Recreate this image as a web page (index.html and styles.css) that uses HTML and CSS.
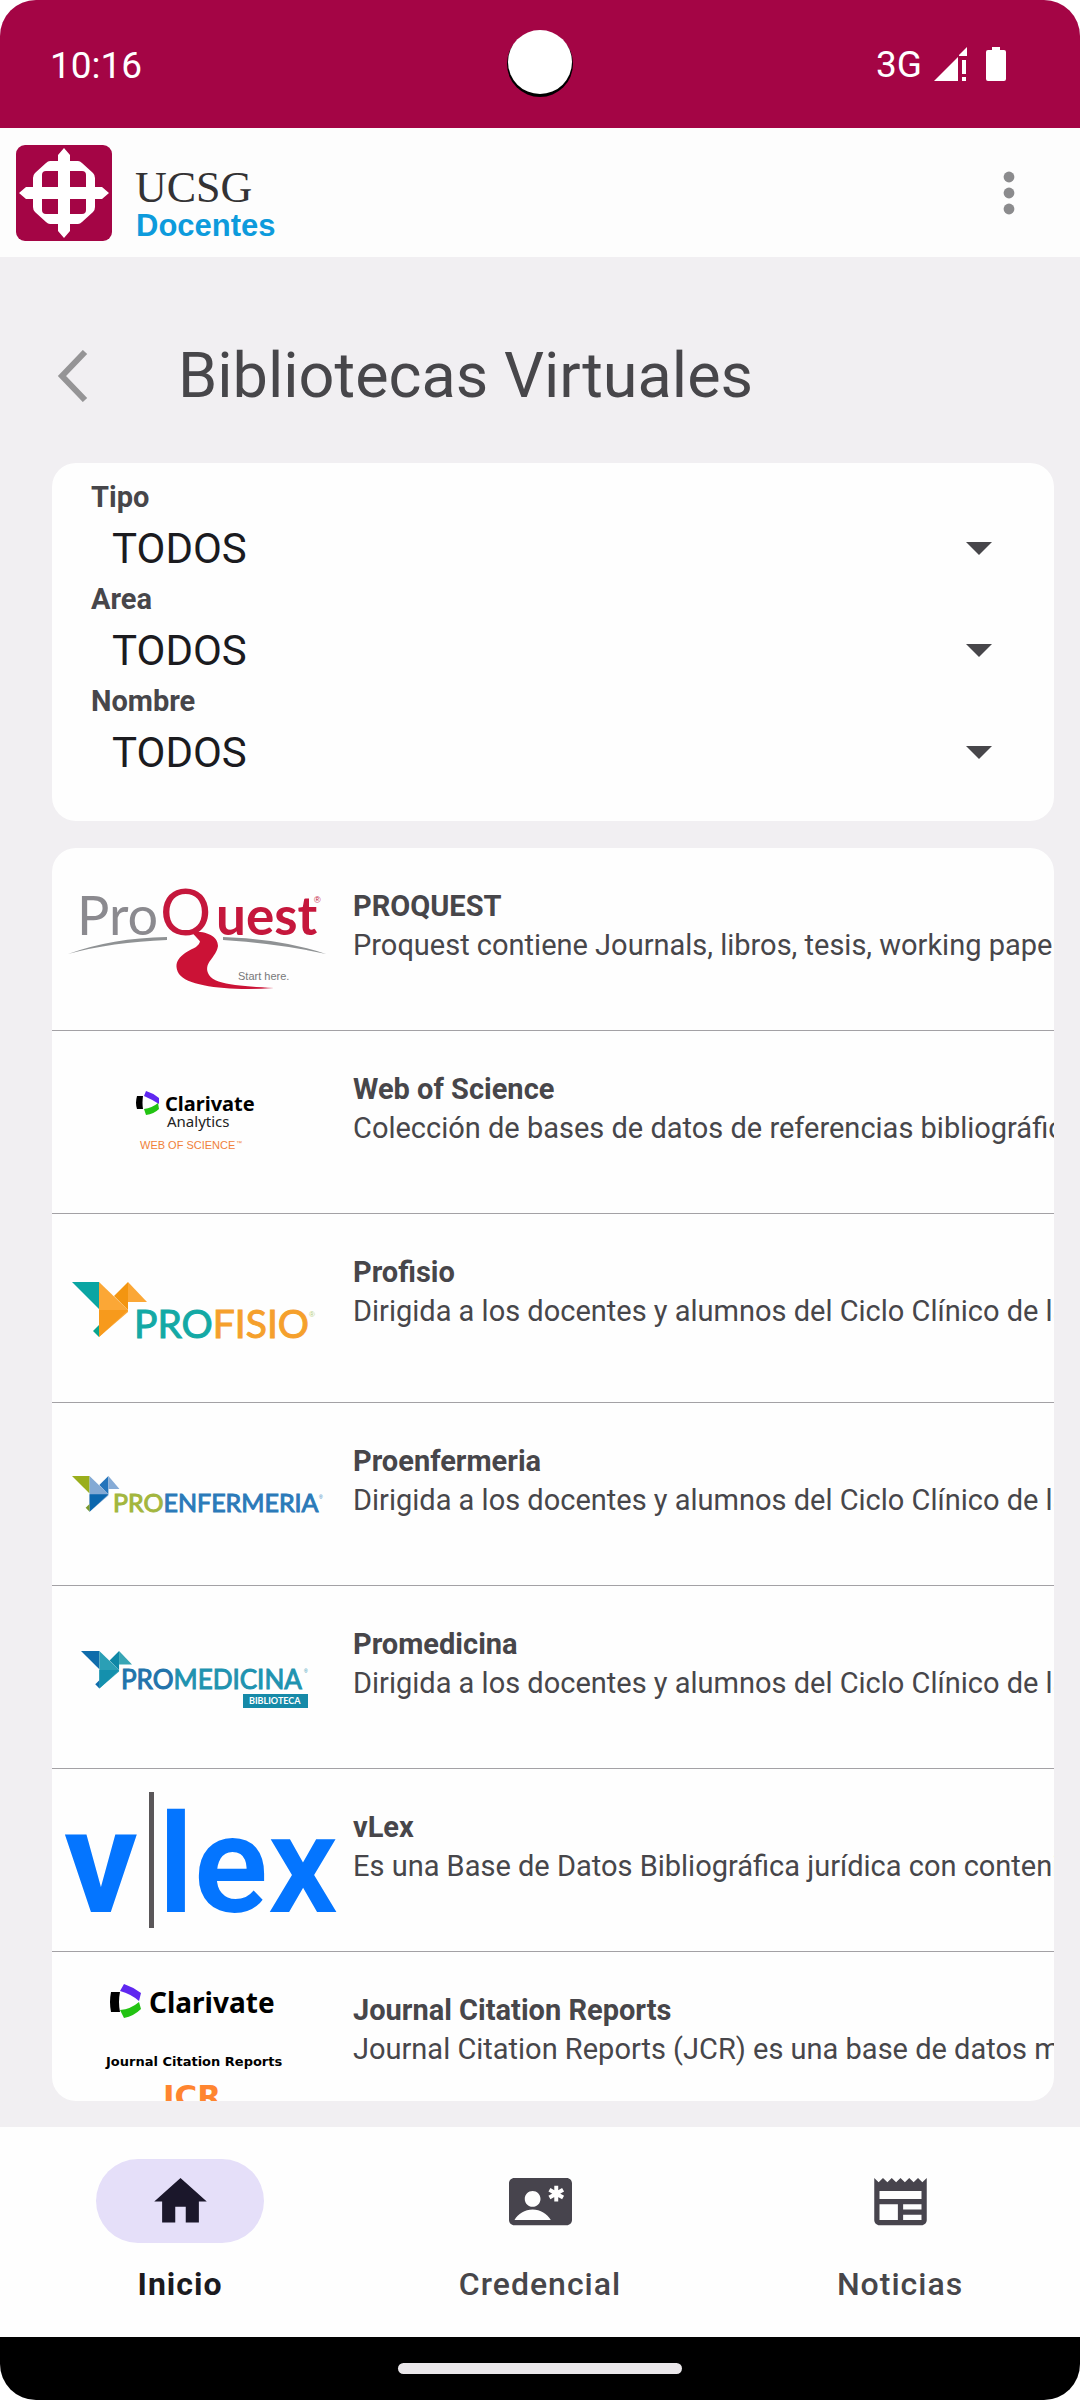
FILE: index.html
```html
<!DOCTYPE html>
<html lang="es">
<head>
<meta charset="utf-8">
<meta name="viewport" content="width=device-width, initial-scale=1">
<title>Bibliotecas Virtuales</title>
<link rel="stylesheet" href="styles.css">
</head>
<body>
<div class="app">
  <div class="status">
    <span class="status-time">10:16</span>
    <span class="camera"></span>
    <span class="status-right">
      <span>3G</span>
      <svg class="signal" width="34" height="34" viewBox="0 0 34 34" fill="#fff" aria-hidden="true"><path d="M0 34L24 10V34zM25 8L33 0V9H25zM28 13h4v14h-4zM28 30h4v4h-4z"/></svg>
      <svg width="20" height="34" viewBox="0 0 20 34" fill="#fff" aria-hidden="true"><path d="M6 0h8v3h4a2 2 0 0 1 2 2v27a2 2 0 0 1-2 2H2a2 2 0 0 1-2-2V5a2 2 0 0 1 2-2h4z"/></svg>
    </span>
  </div>

  <header class="appbar">
    <svg class="brand" width="300" height="129" viewBox="0 0 300 129" role="img" aria-label="UCSG Docentes">
      <rect x="16" y="17" width="96" height="96" rx="9" fill="#a40545"/>
      <g fill="#fff">
        <path d="M64 20l6 7v76l-6 7-6-7V27zM19 65l7-6h76l7 6-7 6H26z"/>
        <path d="M50 33h9v10H46q-4 0-4 4v12h-9v-9q0-3 2-5l11-10q2-2 4-2z"/>
        <path d="M78 33h-9v10h13q4 0 4 4v12h9v-9q0-3-2-5L82 35q-2-2-4-2z"/>
        <path d="M50 96h9V86H46q-4 0-4-4V70h-9v9q0 3 2 5l11 10q2 2 4 2z"/>
        <path d="M78 96h-9V86h13q4 0 4-4V70h9v9q0 3-2 5L82 94q-2 2-4 2z"/>
      </g>
      <text x="135" y="74" class="t-ucsg">UCSG</text>
      <text x="136" y="108" class="t-docentes">Docentes</text>
    </svg>
    <button class="icon-btn menu" type="button" aria-label="Más opciones">
      <svg width="12" height="44" viewBox="0 0 12 44" fill="#8b8b8d" aria-hidden="true"><circle cx="6" cy="6" r="5.4"/><circle cx="6" cy="22" r="5.4"/><circle cx="6" cy="38" r="5.4"/></svg>
    </button>
  </header>

  <main class="content">
    <div class="title-row">
      <button class="icon-btn back" type="button" aria-label="Volver">
        <svg width="34" height="52" viewBox="0 0 34 52" fill="none" stroke="#959496" stroke-width="6" aria-hidden="true"><path d="M31 2L8 26l23 24"/></svg>
      </button>
      <h1>Bibliotecas Virtuales</h1>
    </div>

    <form class="card filters">
      <label for="tipo">Tipo</label>
      <div class="select"><select id="tipo"><option>TODOS</option></select></div>
      <label for="area">Area</label>
      <div class="select"><select id="area"><option>TODOS</option></select></div>
      <label for="nombre">Nombre</label>
      <div class="select"><select id="nombre"><option>TODOS</option></select></div>
    </form>

    <ul class="card list">
      <li>
        <svg width="301" height="182" viewBox="0 0 301 182" role="img" aria-label="ProQuest">
          <g fill="#8f9294"><path d="M16 106Q60 90 115 89V92Q60 94 16 106z"/><path d="M171 89Q230 91 274 106Q230 96 171 92z"/></g>
          <text x="25" y="87" class="lato" font-size="54" fill="#8b8a8f">Pro</text>
          <text x="108" y="87" class="lato" font-size="64" fill="#c5173c">Q</text>
          <path d="M133 84C150 82 166 86 166 98C164 110 152 114 156 125C160 137 190 138 222 140C180 143 136 139 127 126C119 112 132 105 144 99C152 93 148 86 133 84z" fill="#cb1236"/>
          <text x="164" y="87" class="lato" font-size="53" font-weight="700" fill="#c5173c">uest</text>
          <text x="262" y="55" class="arial" font-size="9" fill="#c5173c">®</text>
          <text x="186" y="132" class="arial" font-size="11" fill="#77787a">Start here.</text>
        </svg>
        <div class="info"><h2>PROQUEST</h2><p>Proquest contiene Journals, libros, tesis, working papers</p></div>
      </li>
      <li>
        <svg width="301" height="182" viewBox="0 0 301 182" role="img" aria-label="Clarivate Analytics Web of Science">
          <g transform="translate(84 60)"><path d="M1 5h6q-1 7 0 13H1Q-1 12 1 5z"/><path d="M10 0q7 2 13 7v6Q15 8 8 5z" fill="#5f27f0"/><path d="M22 12l1 6q-5 5-13 6l-2-6q8-1 14-6z" fill="#22c312"/></g>
          <text x="113" y="80" class="noto" font-size="20" font-weight="700">Clarivate</text>
          <text x="115" y="96" class="noto" font-size="15" fill="#222">Analytics</text>
          <text x="88" y="118" class="arial" font-size="11" fill="#f0813a">WEB OF SCIENCE</text>
          <text x="184" y="114" class="arial" font-size="6" fill="#f0813a">™</text>
        </svg>
        <div class="info"><h2>Web of Science</h2><p>Colección de bases de datos de referencias bibliográficas</p></div>
      </li>
      <li class="tall">
        <svg width="301" height="182" viewBox="0 0 301 182" role="img" aria-label="Profisio">
          <g transform="translate(20 68)"><path d="M0 0h27v27z" fill="#0aa5a3"/><path d="M27 0l29 28v2L27 55z" fill="#fba736"/><path d="M27 28h29L27 55z" fill="#f79a1c"/><path d="M42 14L56 0v28z" fill="#f39510"/><path d="M56 0l19 20H56z" fill="#fba736"/><path d="M27 43v12l-6-6z" fill="#0aa58f"/></g>
          <text x="82" y="124" class="lato thick" font-size="39" fill="#13a9a5" stroke="#13a9a5">PRO<tspan fill="#f5a02c" stroke="#f5a02c">FISIO</tspan></text>
          <text x="257" y="103" class="arial" font-size="8" fill="#b7cf7c">®</text>
        </svg>
        <div class="info"><h2>Profisio</h2><p>Dirigida a los docentes y alumnos del Ciclo Clínico de la</p></div>
      </li>
      <li>
        <svg width="301" height="182" viewBox="0 0 301 182" role="img" aria-label="Proenfermeria">
          <g transform="translate(20 73) scale(.65)"><path d="M0 0h27v27z" fill="#9aae1c"/><path d="M27 0l29 28v2L27 55z" fill="#83a9d4"/><path d="M27 28h29L27 55z" fill="#0c67ae"/><path d="M42 14L56 0v28z" fill="#2474bb"/><path d="M56 0l17 20H56z" fill="#86abd6"/><path d="M27 43v12l-6-6z" fill="#7a9a2c"/></g>
          <text x="61" y="109" class="lato thick" font-size="25" fill="#a3b63e" stroke="#a3b63e">PRO<tspan fill="#2b7ab9" stroke="#2b7ab9">ENFERMERIA</tspan></text>
          <text x="267" y="96" class="arial" font-size="5" fill="#2b7ab9">®</text>
        </svg>
        <div class="info"><h2>Proenfermeria</h2><p>Dirigida a los docentes y alumnos del Ciclo Clínico de la</p></div>
      </li>
      <li>
        <svg width="301" height="182" viewBox="0 0 301 182" role="img" aria-label="Promedicina Biblioteca">
          <g transform="translate(29 65) scale(.68)"><path d="M0 0h27v27z" fill="#0f6cab"/><path d="M27 0l29 28v2L27 55z" fill="#2b9fb5"/><path d="M27 28h29L27 55z" fill="#1490ad"/><path d="M42 14L56 0v28z" fill="#0e87a6"/><path d="M56 0l19 20H56z" fill="#37a5b5"/><path d="M27 43v12l-6-6z" fill="#0f6cab"/></g>
          <text x="69" y="103" class="lato thick" font-size="26" fill="#2273ab" stroke="#2273ab">PRO<tspan fill="#1f93b0" stroke="#1f93b0">MEDICINA</tspan></text>
          <text x="252" y="87" class="arial" font-size="5" fill="#1f93b0">®</text>
          <rect x="191" y="108" width="65" height="14" fill="#168aa8"/>
          <text x="197" y="118" class="lato" font-size="9" font-weight="700" fill="#fff">BIBLIOTECA</text>
        </svg>
        <div class="info"><h2>Promedicina</h2><p>Dirigida a los docentes y alumnos del Ciclo Clínico de la</p></div>
      </li>
      <li>
        <svg width="301" height="182" viewBox="0 0 301 182" role="img" aria-label="vLex">
          <text x="12" y="143" class="roboto" font-size="146" font-weight="700" fill="#0475ff">v</text>
          <rect x="97" y="23" width="5" height="136" fill="#5a5759"/>
          <text x="106" y="143" class="roboto" font-size="138" font-weight="600" fill="#0475ff">lex</text>
        </svg>
        <div class="info"><h2>vLex</h2><p>Es una Base de Datos Bibliográfica jurídica con contenido</p></div>
      </li>
      <li>
        <svg width="301" height="182" viewBox="0 0 301 182" role="img" aria-label="Clarivate Journal Citation Reports JCR">
          <g transform="translate(58 32)"><path d="M1 8h9q-2 10 0 20H1Q-1 18 1 8z"/><path d="M14 0q9 3 17 9l-2 8Q21 10 10 7z" fill="#5f27f0"/><path d="M29 18l2 7q-7 7-17 9l-4-8q11-1 19-8z" fill="#22c312"/></g>
          <text x="97" y="61" class="noto" font-size="28" font-weight="700">Clarivate</text>
          <text x="54" y="114" class="dejavu" font-size="13" font-weight="700">Journal Citation Reports</text>
          <text x="111" y="155" class="dejavu" font-size="31" font-weight="700" fill="#ff8530">JCR</text>
        </svg>
        <div class="info"><h2>Journal Citation Reports</h2><p>Journal Citation Reports (JCR) es una base de datos multidisciplinaria</p></div>
      </li>
    </ul>
  </main>

  <nav class="tabs">
    <a class="tab active" href="#inicio">
      <span class="pill"><svg width="63" height="63" viewBox="0 0 24 24" fill="#1b172b" aria-hidden="true"><path d="M10 20v-6h4v6h5v-8h3L12 3 2 12h3v8z"/></svg></span>
      <span>Inicio</span>
    </a>
    <a class="tab" href="#credencial">
      <span class="pill"><svg width="63" height="63" viewBox="0 0 24 24" fill="#47444d" aria-hidden="true"><path d="M22 3H2C.9 3 0 3.900 0 5v14c0 1.100.9 2 2 2h20c1.100 0 2-.9 2-2V5c0-1.100-.9-2-2-2zM9 8c1.660 0 3 1.340 3 3s-1.340 3-3 3-3-1.340-3-3 1.340-3 3-3zM2.080 19C3.460 16.610 6.040 15 9 15s5.540 1.610 6.920 4z"/><path d="M18 6v6M15.400 7.500l5.200 3M20.600 7.500l-5.200 3" stroke="#fff" stroke-width="1.500"/></svg></span>
      <span>Credencial</span>
    </a>
    <a class="tab" href="#noticias">
      <span class="pill"><svg width="63" height="63" viewBox="0 0 24 24" fill="#47444d" aria-hidden="true"><path d="M22 3l-1.670 1.670L18.670 3 17 4.670 15.330 3l-1.660 1.670L12 3l-1.670 1.670L8.670 3 7 4.670 5.330 3 3.670 4.670 2 3v16c0 1.100.9 2 2 2h16c1.100 0 2-.9 2-2V3zM11 19H4v-6h7v6zm9 0h-7v-2h7v2zm0-4h-7v-2h7v2zm0-4H4V8h16v3z"/></svg></span>
      <span>Noticias</span>
    </a>
  </nav>
  <div class="gesture"><span></span></div>
</div>
</body>
</html>
```
FILE: styles.css
```css
* { box-sizing: border-box; }

body {
  margin: 0;
  background: #fff;
  color: #47464a;
  font-family: Roboto, "Liberation Sans", sans-serif;
}

h1, h2, p, ul { margin: 0; padding: 0; font-weight: 400; }

.app {
  display: flex;
  flex-direction: column;
  height: 100vh;
  overflow: hidden;
  border-radius: 36px;
  background: #f1eff2;
}

/* System status bar */
.status {
  flex: none;
  display: grid;
  grid-template-columns: 1fr auto 1fr;
  align-items: center;
  height: 128px;
  padding: 4px 74px 4px 50px;
  background: #a40545;
  color: #fff;
  font-size: 37px;
}
.status-time { padding-top: 3px; }
.camera {
  width: 64px;
  height: 64px;
  margin: 0 0 4px 24px;
  border-radius: 50%;
  background: #fff;
  box-shadow: 0 2px 0 1px #000;
}
.status-right {
  display: flex;
  justify-content: flex-end;
  align-items: center;
}
.signal { margin: 0 18px 0 12px; }

/* App bar */
.appbar {
  flex: none;
  display: flex;
  justify-content: space-between;
  align-items: center;
  height: 129px;
  background: #fdfdfd;
}
.brand { display: block; }
.icon-btn {
  display: flex;
  padding: 0;
  border: 0;
  background: none;
}
.menu { padding: 12px 65px; }

.t-ucsg { font-family: "Liberation Serif", serif; font-size: 44px; fill: #333234; }
.t-docentes { font-family: "Liberation Sans", sans-serif; font-size: 31px; font-weight: 700; fill: #0d9bdc; }
.lato { font-family: Lato, sans-serif; }
.thick { stroke-width: 1px; }
.noto { font-family: "Noto Sans", sans-serif; }
.arial { font-family: "Liberation Sans", sans-serif; }
.dejavu { font-family: "DejaVu Sans", sans-serif; }
.roboto { font-family: Roboto, sans-serif; }

/* Page content */
.content {
  flex: 1;
  display: flex;
  flex-direction: column;
  min-height: 0;
  padding: 82px 26px 26px 52px;
}
.title-row {
  display: flex;
  align-items: center;
  gap: 90px;
  padding-bottom: 50px;
}
h1 { font-size: 63px; line-height: 74px; }
.back { margin-left: 2px; }

.card {
  border-radius: 24px;
  background: #fefefe;
}

.filters {
  padding: 18px 36px 34px 39px;
  margin-bottom: 27px;
}
.filters label {
  display: block;
  font-size: 29px;
  font-weight: 700;
  line-height: 33px;
}
.select {
  display: flex;
  align-items: center;
  height: 69px;
}
.select select {
  flex: 1;
  height: 69px;
  padding: 0 0 0 21px;
  border: 0;
  appearance: none;
  background: none;
  color: #1b1b1f;
  font: 42px Roboto, "Liberation Sans", sans-serif;
}
.select::after {
  content: "";
  margin-right: 26px;
  border: 13px solid transparent;
  border-top-color: #47464a;
  border-bottom: 0;
}

.list {
  flex: 1;
  min-height: 0;
  overflow: auto;
  overflow-x: hidden;
  scrollbar-width: none;
  list-style: none;
}
.list li {
  display: flex;
  height: 183px;
  border-bottom: 1px solid #a3a1a5;
}
.list .tall { height: 189px; }
.list svg { flex: none; }
.info {
  padding-top: 39px;
  font-size: 29px;
  line-height: 39px;
  white-space: nowrap;
}
.info h2 { font-size: 29px; font-weight: 700; }

/* Bottom navigation */
.tabs {
  flex: none;
  display: flex;
  padding: 32px 0;
  height: 210px;
  background: #fefefe;
}
.tab {
  flex: 1;
  display: flex;
  flex-direction: column;
  align-items: center;
  gap: 22px;
  color: #47464a;
  font-size: 32px;
  font-weight: 500;
  line-height: 38px;
  letter-spacing: 1px;
  text-decoration: none;
}
.pill {
  display: flex;
  justify-content: center;
  align-items: center;
  width: 168px;
  height: 84px;
  border-radius: 42px;
}
.active { color: #1b1b1f; font-weight: 700; }
.active .pill { background: #e5dff9; }

.gesture {
  flex: none;
  display: flex;
  justify-content: center;
  align-items: center;
  height: 63px;
  background: #000;
}
.gesture span {
  width: 284px;
  height: 11px;
  border-radius: 6px;
  background: #eae7ea;
}
```
